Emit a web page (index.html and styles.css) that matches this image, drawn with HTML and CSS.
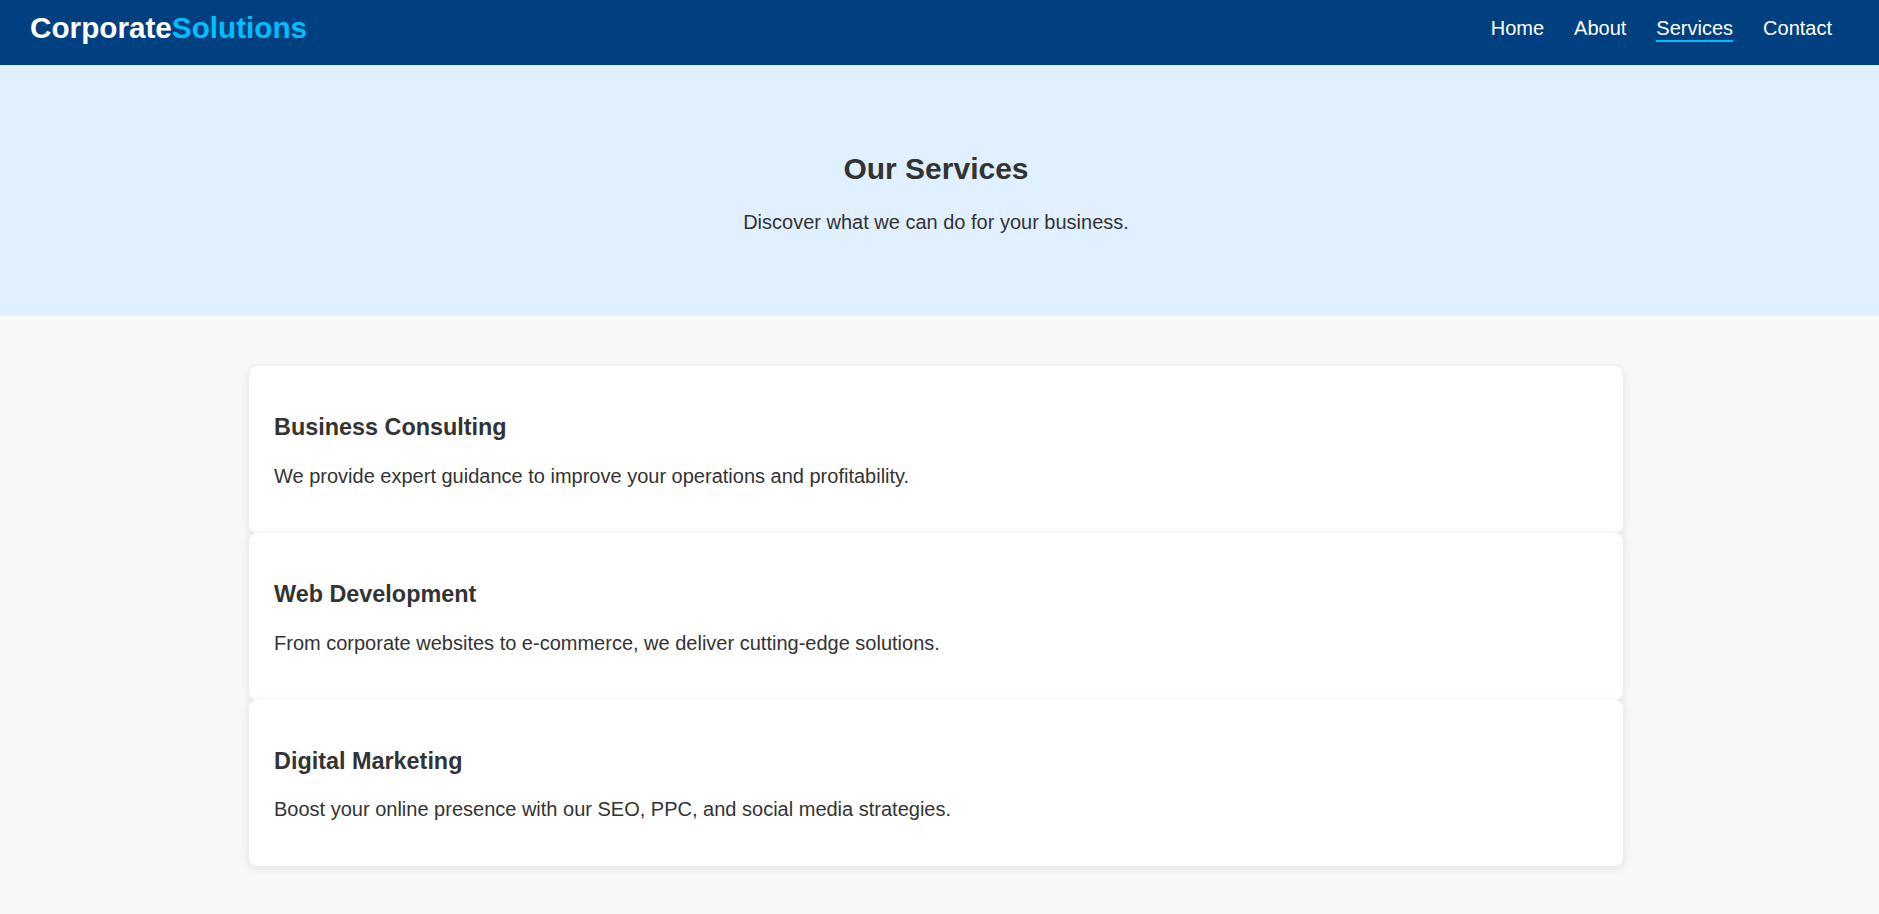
FILE: index.html
```html
<!DOCTYPE html>
<html lang="en">
<head>
<meta charset="utf-8">
<title>CorporateSolutions - Services</title>
<link rel="stylesheet" href="styles.css">
</head>
<body>
<header class="site-header">
  <div class="logo">Corporate<span class="logo-accent">Solutions</span></div>
  <nav class="main-nav">
    <ul class="nav-list">
      <li><a href="#" class="nav-link">Home</a></li>
      <li><a href="#" class="nav-link">About</a></li>
      <li><a href="#" class="nav-link active">Services</a></li>
      <li><a href="#" class="nav-link">Contact</a></li>
    </ul>
  </nav>
</header>
<section class="hero">
  <h2 class="hero-title">Our Services</h2>
  <p class="hero-sub">Discover what we can do for your business.</p>
</section>
<main class="services">
  <div class="service-list">
    <article class="service-card">
      <h3 class="service-title">Business Consulting</h3>
      <p class="service-text">We provide expert guidance to improve your operations and profitability.</p>
    </article>
    <article class="service-card">
      <h3 class="service-title">Web Development</h3>
      <p class="service-text">From corporate websites to e-commerce, we deliver cutting-edge solutions.</p>
    </article>
    <article class="service-card">
      <h3 class="service-title">Digital Marketing</h3>
      <p class="service-text">Boost your online presence with our SEO, PPC, and social media strategies.</p>
    </article>
  </div>
</main>
</body>
</html>
```
FILE: styles.css
```css
* { box-sizing: border-box; }

body {
  margin: 0;
  font-family: "Liberation Sans", Arial, sans-serif;
  font-size: 20px;
  color: #333;
  background: #f8f8f8;
}

.site-header {
  display: flex;
  justify-content: space-between;
  align-items: flex-start;
  height: 65px;
  padding: 0 47px 0 30px;
  background: #004080;
}

.logo {
  padding-top: 11px;
  font-size: 29.7px;
  font-weight: bold;
  color: #fff;
}

.logo-accent { color: #00bfff; }

.main-nav { padding-top: 17px; }

.nav-list {
  display: flex;
  gap: 30px;
  margin: 0;
  padding: 0;
  list-style: none;
}

.nav-link {
  display: block;
  color: #fff;
  text-decoration: none;
  font-size: 20px;
  border-bottom: 2px solid transparent;
}

.nav-link.active { border-bottom-color: #00bfff; }

.hero {
  padding: 87px 27px 82px 20px;
  text-align: center;
  background: #e0f0ff;
}

.hero-title {
  margin: 0 0 25px;
  font-size: 30px;
}

.hero-sub {
  margin: 0;
  font-size: 20px;
}

.services { padding: 50px 27px 50px 20px; }

.service-list {
  width: 75%;
  margin: 0 auto;
}

.service-card {
  padding: 25px;
  background: #fff;
  border-radius: 8px;
  box-shadow: 0 2px 10px rgba(0, 0, 0, 0.1);
}

.service-title {
  margin: 23.4px 0;
  font-size: 23.4px;
}

.service-text {
  margin: 0 0 20px;
  font-size: 20px;
}
```
